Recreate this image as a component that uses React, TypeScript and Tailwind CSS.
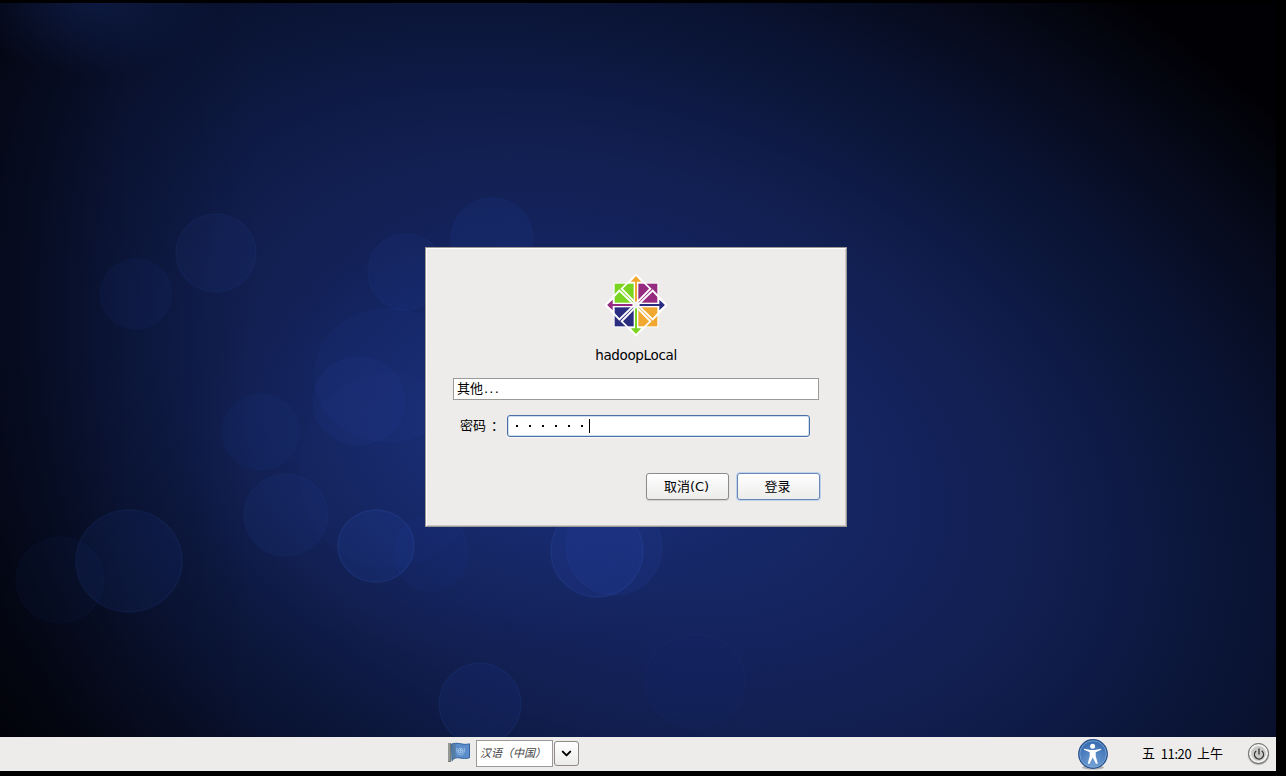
import { ChevronDown, Power } from "lucide-react";

// Soft light spots of the wallpaper: x, y, rx, ry, fill opacity, rim opacity
const bubbles = [
  [216, 253, 40, 39, 0.09, 0.08],
  [136, 294, 36, 35, 0.07, 0.04],
  [406, 272, 38, 38, 0.1, 0.07],
  [492, 238, 41, 40, 0.11, 0.06],
  [359, 401, 46, 44, 0.09, 0.04],
  [389, 375, 76, 68, 0.07, 0.01],
  [261, 432, 39, 38, 0.08, 0.04],
  [286, 515, 42, 41, 0.09, 0.06],
  [376, 546, 38, 36, 0.16, 0.16],
  [129, 561, 53, 51, 0.11, 0.1],
  [60, 580, 44, 43, 0.05, 0.04],
  [431, 553, 37, 38, 0.06, 0.04],
  [597, 551, 46, 46, 0.18, 0.14],
  [614, 547, 48, 48, 0.14, 0.08],
  [480, 704, 41, 41, 0.11, 0.1],
  [695, 681, 50, 47, 0.03, 0.05],
  [390, 470, 92, 98, 0.04, 0],
];

const Wallpaper = () => (
  <svg
    className="absolute inset-0 h-full w-full"
    viewBox="0 3 1276 734"
    preserveAspectRatio="none"
  >
    <defs>
      <radialGradient
        id="sky"
        gradientUnits="userSpaceOnUse"
        cx="0"
        cy="0"
        r="1"
        gradientTransform="translate(635 440) rotate(22) scale(960 620)"
      >
        <stop offset="0" stopColor="#192d74" />
        <stop offset="0.24" stopColor="#152562" />
        <stop offset="0.48" stopColor="#101d4c" />
        <stop offset="0.7" stopColor="#091230" />
        <stop offset="0.88" stopColor="#050816" />
        <stop offset="1.05" stopColor="#010105" />
      </radialGradient>
      <linearGradient id="leftShade" x1="0" x2="1" y1="0" y2="0">
        <stop offset="0" stopColor="#010208" stopOpacity="0.5" />
        <stop offset="0.5" stopColor="#010208" stopOpacity="0.15" />
        <stop offset="1" stopColor="#010208" stopOpacity="0" />
      </linearGradient>
      <radialGradient id="glow">
        <stop offset="0" stopColor="#2344a4" stopOpacity="0.22" />
        <stop offset="1" stopColor="#2344a4" stopOpacity="0" />
      </radialGradient>
      <radialGradient id="corner">
        <stop offset="0" stopColor="#122358" stopOpacity="0.6" />
        <stop offset="1" stopColor="#122358" stopOpacity="0" />
      </radialGradient>
    </defs>
    <rect x="0" y="3" width="1276" height="734" fill="url(#sky)" />
    <rect x="0" y="3" width="260" height="734" fill="url(#leftShade)" />
    <ellipse cx="470" cy="450" rx="290" ry="210" fill="url(#glow)" />
    <ellipse cx="95" cy="-5" rx="130" ry="80" fill="url(#corner)" />
    {bubbles.map(([cx, cy, rx, ry, fill, rim], i) => (
      <ellipse
        key={i}
        cx={cx}
        cy={cy}
        rx={rx}
        ry={ry}
        fill="#2849b4"
        fillOpacity={fill}
        stroke="#3f68cc"
        strokeOpacity={rim}
        strokeWidth="1.5"
      />
    ))}
  </svg>
);

const CentosLogo = () => (
  <svg className="h-20 w-20" viewBox="0 0 240 240">
    <path
      d="M120 27 146 53H187V94L213 120 187 146V187H146L120 213 94 187H53V146L27 120 53 94V53H94Z"
      fill="#fff"
    />
    <path fill="#7bd41f" d="M56 56H113V113H56Z" />
    <path fill="#962c80" d="M127 56H184V113H127Z" />
    <path fill="#2b2d80" d="M56 127H113V184H56Z" />
    <path fill="#f0a830" d="M127 127H184V184H127Z" />
    <path fill="#f0a830" d="M120 32 136 50H123V115H117V50H104Z" />
    <path fill="#2b2d80" d="M208 120 190 136V123H125V117H190V104Z" />
    <path fill="#7bd41f" d="M120 208 136 190H123V125H117V190H104Z" />
    <path fill="#962c80" d="M32 120 50 136V123H115V117H50V104Z" />
    <g fill="none" stroke="#fff" strokeWidth="5.5">
      <path d="M120 29 163 71 120 115 77 71Z" />
      <path d="M120 211 163 169 120 125 77 169Z" />
      <path d="M29 120 70 77 115 120 70 163Z" />
      <path d="M211 120 170 77 125 120 170 163Z" />
    </g>
    <circle cx="120" cy="120" r="7" fill="#f1f1f1" />
  </svg>
);

const FlagIcon = () => (
  <svg className="h-[22px] w-6" viewBox="0 0 24 22">
    <path d="M1 1H4V20H1Z" fill="#777b76" />
    <path d="M2 1V19" stroke="#b5b8b2" />
    <path
      d="M4.5 2C8 .9 12 1.2 15 2 18 2.6 20 2.4 22.5 1.8V15.8C19 16.8 16 16.6 13 16 9.5 15.2 7 16 5 18.5Z"
      fill="#5b8dca"
      stroke="#34639e"
    />
    <path d="M4.7 2V20L8.5 15V1.6Z" fill="#55748f" fillOpacity=".65" />
    <g fill="none" stroke="#a5c5e8" strokeWidth=".9">
      <circle cx="13.6" cy="8.6" r="2.4" />
      <path d="M10 6C9 10.6 11.5 12.8 13.6 12.8S18.2 10.6 17.2 6M11.3 8.6H16M13.6 6.2V11" />
    </g>
  </svg>
);

const AccessIcon = () => (
  <svg className="h-8 w-8" viewBox="0 0 32 32">
    <defs>
      <radialGradient id="accessFill" cx=".5" cy=".85" r=".8">
        <stop offset="0" stopColor="#739fd4" />
        <stop offset="1" stopColor="#356bb0" />
      </radialGradient>
    </defs>
    <ellipse cx="16" cy="29.5" rx="11" ry="2" fill="#000" fillOpacity=".25" />
    <circle cx="16" cy="16" r="14.3" fill="url(#accessFill)" stroke="#284f89" strokeWidth="1.2" />
    <circle cx="16" cy="16" r="13.2" fill="none" stroke="#83abd9" strokeWidth=".8" />
    <circle cx="15.6" cy="8.2" r="2.5" fill="#fff" />
    <path
      d="M7 10.7 14 12H17.5L24.2 10.7V11.8L18.7 14.2V18L20.8 25.7H19L15.7 19.5 12.5 25.7H10.8L12.7 18V14.2L7 11.8Z"
      fill="#fff"
    />
  </svg>
);

const buttonBase =
  "flex h-[27px] w-[83px] items-center justify-center rounded-[3px] border bg-linear-to-b from-white to-[#ececeb] pr-0.5";

const LoginDialog = () => (
  <div className="relative ml-[425px] flex h-[280px] w-[422px] flex-col border border-[#9b9896] bg-[#edeceb] pt-[17px] pl-[27px] shadow-[inset_1px_1px_0_#fff,inset_-1px_-1px_0_#cbc8c4]">
    <div className="flex w-[366px] flex-col items-center">
      <CentosLogo />
      <div className="h-5 text-[13.5px] leading-5 tracking-[-0.35px]">
        hadoopLocal
      </div>
    </div>
    <div className="mt-[13px] flex h-[22px] w-[366px] items-center border border-[#9c9a98] bg-white pl-[3px]">
      其他<span className="ml-px tracking-[1.2px]">...</span>
    </div>
    <div className="mt-[15px] flex h-[22px] items-center pl-[7px]">
      <label className="flex w-[47px] whitespace-nowrap">
        密码<span className="ml-[5px]">：</span>
      </label>
      <div className="flex h-[22px] w-[303px] items-center rounded-[3px] border border-[#4a6fa5] bg-white pl-2 shadow-[inset_0_0_0_1px_#cfdff2,0_1px_0_#fafafa]">
        <div className="flex gap-[11px]">
          {Array.from({ length: 6 }, (_, i) => (
            <span key={i} className="h-0.5 w-0.5 bg-black" />
          ))}
        </div>
        <span className="ml-1.5 h-3.5 w-px bg-black" />
      </div>
    </div>
    <div className="mt-9 flex gap-2 pl-[193px]">
      <button
        className={`${buttonBase} border-[#8d8a87] shadow-[0_1px_1px_#d2d0ce]`}
      >
        取消<span className="text-[13px]">(C)</span>
      </button>
      <button
        className={`${buttonBase} border-[#6788b7] shadow-[0_0_0_1px_#bfd2ea]`}
      >
        登录
      </button>
    </div>
  </div>
);

const Panel = () => (
  <div className="flex h-[34px] w-[1276px] items-center bg-[#edeceb] pl-[447px]">
    <div className="pb-0.5">
      <FlagIcon />
    </div>
    <div className="mb-px ml-[5px] flex h-[27px] w-[77px] items-center border border-[#9c9a98] bg-white pt-px pl-[3px] text-[11px] whitespace-nowrap text-[#444] italic">
      汉语（中国）
    </div>
    <button className="mb-px ml-px flex h-[25px] w-[25px] items-center justify-center rounded-[3px] border border-[#8d8a87] bg-linear-to-b from-white to-[#ececeb] pr-px">
      <ChevronDown className="h-[15px] w-[15px]" strokeWidth={3.2} />
    </button>
    <div className="ml-[498px]">
      <AccessIcon />
    </div>
    <div className="ml-[33px] flex w-[81px] justify-between whitespace-nowrap">
      <span>五</span>
      <span className="font-['Noto_Sans_CJK_SC',sans-serif] tracking-[-0.4px]">
        11:20
      </span>
      <span>上午</span>
    </div>
    <div className="mb-px ml-[25px] flex h-[21px] w-[21px] items-center justify-center rounded-full border border-[#656565] bg-[#c9c9c7] shadow-[inset_0_0_0_2px_#f2f2f0,0_1px_1px_#aaa]">
      <Power className="h-3 w-3 text-[#333]" strokeWidth={2.6} />
    </div>
  </div>
);

export default function App() {
  return (
    <div className="h-[776px] w-[1286px] overflow-hidden bg-black pt-[3px] font-['DejaVu_Sans','Noto_Sans_CJK_SC',sans-serif] text-[13px] text-black">
      <div className="relative h-[734px] w-[1276px] pt-[244px]">
        <Wallpaper />
        <LoginDialog />
      </div>
      <Panel />
    </div>
  );
}
